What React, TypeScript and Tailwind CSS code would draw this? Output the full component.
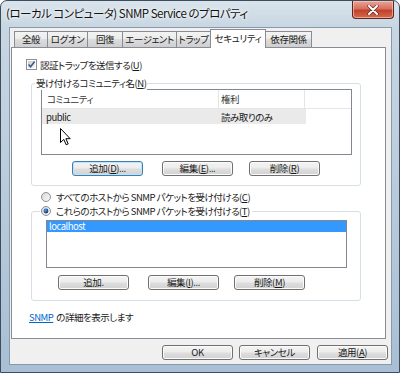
import React from "react";

const FONT =
  "font-['Noto_Sans_CJK_JP','Noto_Sans',sans-serif] [font-feature-settings:'palt']";

function U({ children }: { children: React.ReactNode }) {
  return <span className="underline underline-offset-[1px]">{children}</span>;
}

function Btn({
  children,
  focused = false,
  className = "",
}: {
  children: React.ReactNode;
  focused?: boolean;
  className?: string;
}) {
  const look = focused
    ? "border-[#3c7fb1] shadow-[inset_0_0_0_1px_#bfe3f8]"
    : "border-[#707070] shadow-[inset_0_0_0_1px_#fbfbfb]";
  return (
    <div
      className={`h-[15px] w-[71px] shrink-0 rounded-[3px] border ${look} bg-[linear-gradient(#f4f4f4_0%,#ececec_48%,#dedede_52%,#d2d2d2_100%)] flex items-center justify-center whitespace-nowrap text-[9.5px] tracking-[-0.4px] leading-none text-[#1a1a1a] ${className}`}
    >
      {children}
    </div>
  );
}

function CheckBox() {
  return (
    <svg width="11" height="11" viewBox="0 0 11 11" className="shrink-0">
      <defs>
        <linearGradient id="cbg" x1="0" y1="0" x2="1" y2="1">
          <stop offset="0" stopColor="#c9ced6" />
          <stop offset="1" stopColor="#f4f5f7" />
        </linearGradient>
      </defs>
      <rect x="0.5" y="0.5" width="10" height="10" fill="#fff" stroke="#8e8f8f" />
      <rect x="2" y="2" width="7" height="7" fill="url(#cbg)" />
      <path d="M2.6 5.4 L4.6 7.8 L8.6 2.6" fill="none" stroke="#3d5796" strokeWidth="1.6" />
    </svg>
  );
}

function Radio({ checked = false }: { checked?: boolean }) {
  return (
    <svg width="10" height="10" viewBox="0 0 10 10" className="shrink-0">
      <defs>
        <linearGradient id={checked ? "rg1" : "rg0"} x1="0" y1="0" x2="1" y2="1">
          <stop offset="0" stopColor="#d4d6d9" />
          <stop offset="1" stopColor="#fbfbfb" />
        </linearGradient>
        <radialGradient id="rdot" cx="0.4" cy="0.35" r="0.7">
          <stop offset="0" stopColor="#6fa4e8" />
          <stop offset="0.6" stopColor="#1d4f9e" />
          <stop offset="1" stopColor="#0c2a5e" />
        </radialGradient>
      </defs>
      <circle cx="5" cy="5" r="4.5" fill={`url(#${checked ? "rg1" : "rg0"})`} stroke="#8e8f8f" />
      {checked && <circle cx="5" cy="5" r="2.4" fill="url(#rdot)" />}
    </svg>
  );
}

function Cursor() {
  return (
    <svg
      width="12"
      height="18"
      viewBox="0 0 12 18"
      className="absolute left-[59px] top-[127px]"
    >
      <path
        d="M0.5 0.5 L0.5 14.5 L3.8 11.4 L6.2 16.8 L8.2 15.9 L5.9 10.7 L10.2 10.7 Z"
        fill="#fff"
        stroke="#000"
        strokeWidth="1"
        strokeLinejoin="round"
      />
    </svg>
  );
}

function CloseBtn() {
  return (
    <div className="mr-[5px] w-[42px] h-[18px] rounded-b-[4px] border border-t-0 border-[#5a2620] bg-[linear-gradient(180deg,#e9a598_0%,#d8705e_45%,#c2412c_55%,#d46a4a_100%)] shadow-[inset_0_0_0_1px_rgba(255,210,200,0.6)] flex items-center justify-center">
      <svg width="12" height="10" viewBox="0 0 12 10">
        <path
          d="M2 1 L10 9 M10 1 L2 9"
          stroke="#5a2620"
          strokeWidth="3.2"
          strokeLinecap="round"
        />
        <path
          d="M2 1 L10 9 M10 1 L2 9"
          stroke="#ffffff"
          strokeWidth="2"
          strokeLinecap="round"
        />
      </svg>
    </div>
  );
}

const tabs: { label: string; w: string; sel?: boolean }[] = [
  { label: "全般", w: "w-[34px]" },
  { label: "ログオン", w: "w-[41px]" },
  { label: "回復", w: "w-[36px]" },
  { label: "エージェント", w: "w-[55px]" },
  { label: "トラップ", w: "w-[35px]" },
  { label: "セキュリティ", w: "w-[56px]", sel: true },
  { label: "依存関係", w: "w-[47px]" },
];

export default function App() {
  return (
    <div
      className={`relative w-[400px] h-[373px] overflow-hidden rounded-t-[7px] border border-[#3e4d5e] bg-[linear-gradient(180deg,#d9e3eb_0%,#c8d6e2_7%,#b6c9da_60%,#a8bfd4_100%)] ${FONT}`}
    >
      {/* Title bar */}
      <div className="h-[26px] flex items-start justify-between">
        <div className="pl-[5px] pt-[5px] text-[11.5px] tracking-[-0.5px] leading-[14px] text-[#111] whitespace-nowrap [text-shadow:0_0_6px_#ffffff,0_0_3px_#ffffff]">
          (ローカル コンピュータ) SNMP Service のプロパティ
        </div>
        <CloseBtn />
      </div>

      {/* Client area */}
      <div className="ml-[8px] w-[383px] h-[338px] border border-[#8799ab] bg-[#f0f0f0] pt-[1px]">
        {/* Tabs */}
        <div className="ml-[4px] h-[18px] flex items-end">
          {tabs.map((t, i) =>
            t.sel ? (
              <div
                key={t.label}
                className={`relative z-10 -mb-[1px] ${i > 0 ? "-ml-[1px]" : ""} ${t.w} h-[19px] border border-b-0 border-[#898c95] bg-white flex items-center justify-center whitespace-nowrap text-[9.5px] tracking-[-0.4px] leading-none text-[#1a1a1a] pb-[1px]`}
              >
                {t.label}
              </div>
            ) : (
              <div
                key={t.label}
                className={`${i > 0 ? "-ml-[1px]" : ""} ${t.w} h-[16px] border border-b-0 border-[#898c95] bg-[linear-gradient(#f3f3f3_0%,#ebebeb_50%,#dddddd_50%,#cfcfcf_100%)] flex items-center justify-center whitespace-nowrap text-[9.5px] tracking-[-0.4px] leading-none text-[#1a1a1a]`}
              >
                {t.label}
              </div>
            )
          )}
        </div>

        {/* Tab panel */}
        <div className="ml-[1px] w-[375px] h-[292px] border border-[#898c95] bg-white text-[9.5px] tracking-[-0.5px] leading-[14px] text-[#1a1a1a] whitespace-nowrap">
          {/* Checkbox row */}
          <div className="mt-[11px] pl-[14px] h-[11px] flex items-center">
            <CheckBox />
            <span className="ml-[3px]">
              認証トラップを送信する(<U>U</U>)
            </span>
          </div>

          {/* Group 1 */}
          <div className="relative mt-[13px] ml-[19px] w-[330px] h-[103px] rounded-[3px] border border-[#d5dfe5] pt-[5px] pl-[9px]">
            <div className="absolute left-[3px] -top-[8px] bg-white px-[1px] leading-[14px]">
              受け付けるコミュニティ名(<U>N</U>)
            </div>
            <div className="w-[311px] h-[66px] border border-[#828790] bg-white">
              <div className="h-[19px] flex border-b border-[#e5e5e5] text-[#333]">
                <div className="w-[177px] pl-[5px] flex items-center border-r border-[#e5e5e5]">
                  コミュニティ
                </div>
                <div className="w-[86px] pl-[2px] flex items-center border-r border-[#e5e5e5]">
                  権利
                </div>
              </div>
              <div className="w-[264px] h-[15px] flex items-center bg-[#eaeaea]">
                <div className="w-[178px] pl-[4px]">public</div>
                <div className="pl-[1px]">読み取りのみ</div>
              </div>
            </div>
            <div className="mt-[6px] flex">
              <Btn focused className="ml-[31px]">
                追加(<U>D</U>)...
              </Btn>
              <Btn className="ml-[19px]">
                編集(<U>E</U>)...
              </Btn>
              <Btn className="ml-[16px]">
                削除(<U>R</U>)
              </Btn>
            </div>
          </div>

          {/* Radio 1 */}
          <div className="mt-[4px] pl-[29px] h-[14px] flex items-center">
            <Radio />
            <span className="ml-[5px]">
              すべてのホストから SNMP パケットを受け付ける(<U>C</U>)
            </span>
          </div>

          {/* Group 2 */}
          <div className="relative mt-[7px] ml-[19px] w-[330px] h-[90px] rounded-[3px] border border-[#d5dfe5] pt-[8px] pl-[14px]">
            <div className="absolute left-[8px] -top-[8px] h-[14px] bg-white pl-[1px] pr-[2px] flex items-center">
              <Radio checked />
              <span className="ml-[5px]">
                これらのホストから SNMP パケットを受け付ける(<U>T</U>)
              </span>
            </div>
            <div className="w-[301px] h-[48px] border border-[#828790] bg-white">
              <div className="h-[11px] bg-[#3399ff] text-white pl-[2px] flex items-center leading-none">
                localhost
              </div>
            </div>
            <div className="mt-[7px] flex">
              <Btn className="ml-[12px]">追加.</Btn>
              <Btn className="ml-[19px]">
                編集(<U>I</U>)...
              </Btn>
              <Btn className="ml-[15px]">
                削除(<U>M</U>)
              </Btn>
            </div>
          </div>

          {/* Link */}
          <div className="mt-[9px] pl-[17px] h-[14px] flex items-center">
            <span className="text-[#0066cc] underline underline-offset-[1px]">SNMP</span>
            <span className="ml-[3px]">の詳細を表示します</span>
          </div>
        </div>

        {/* Bottom buttons */}
        <div className="mt-[6px] pr-[3px] flex justify-end">
          <Btn>OK</Btn>
          <Btn className="ml-[6px]">キャンセル</Btn>
          <Btn className="ml-[7px]">
            適用(<U>A</U>)
          </Btn>
        </div>
      </div>

      <Cursor />
    </div>
  );
}
